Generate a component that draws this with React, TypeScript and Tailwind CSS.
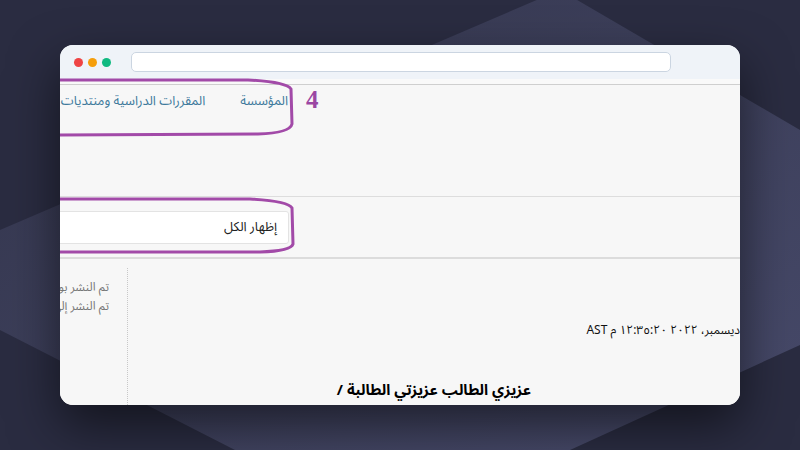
import React from "react";

const arabic = { fontFamily: '"Noto Sans Arabic", "DejaVu Sans", sans-serif' };

export default function App() {
  return (
    <div className="relative w-[800px] h-[450px] overflow-hidden bg-[#2a2c41]">
      {/* decorative background shapes */}
      <svg className="absolute inset-0" width="800" height="450" viewBox="0 0 800 450">
        <defs>
          <linearGradient id="g1" x1="0" y1="0" x2="1" y2="1">
            <stop offset="0" stopColor="#33354c" />
            <stop offset="1" stopColor="#474a6a" />
          </linearGradient>
        </defs>
        <polygon points="560,-10 800,130 800,345 570,450 235,450 0,330 0,230" fill="url(#g1)" />
      </svg>

      <div className="relative pt-[45px] pl-[60px]">
        <div className="w-[680px] h-[360px] rounded-[13px] overflow-hidden flex flex-col bg-[#f7f7f7] shadow-[0_20px_50px_rgba(0,0,0,0.55)]">
          {/* title bar */}
          <div className="h-[34px] shrink-0 bg-[#eff3f8] flex items-center">
            <div className="flex items-center gap-[5px] pl-[14px]">
              <span className="w-[9px] h-[9px] rounded-full bg-[#ef4444]" />
              <span className="w-[9px] h-[9px] rounded-full bg-[#f59e0b]" />
              <span className="w-[9px] h-[9px] rounded-full bg-[#10b981]" />
            </div>
            <div className="ml-[20px] w-[540px] h-[20px] bg-white border border-[#cbd5e1] rounded-[5px]" />
          </div>

          {/* page */}
          <div dir="rtl" className="flex-1 flex flex-col bg-[#f7f7f7] overflow-hidden" style={arabic}>
            <div className="h-[5px] shrink-0 bg-[#f9f9f9]" />
            <div className="h-[1px] shrink-0 bg-[#cfcfcf]" />
            {/* nav */}
            <div className="h-[111px] shrink-0 pr-[452px] pt-[7px] flex gap-[35px] whitespace-nowrap text-[13px] leading-[18px] text-[#3e7a9c]">
              <span>المؤسسة</span>
              <span>المقررات الدراسية ومنتديات</span>
              <span>المجتمعات</span>
            </div>
            <div className="h-[1px] shrink-0 bg-[#dddddd]" />
            {/* show all */}
            <div className="h-[60px] shrink-0 pr-[451px] pt-[14px] flex">
              <div className="w-[300px] h-[33px] shrink-0 bg-white border border-[#e3e3e3] rounded-[3px] flex items-center pr-[11px] text-[13px] text-[#222]">
                إظهار الكل
              </div>
            </div>
            <div className="h-[2px] shrink-0 bg-[#dcdcdc]" />
            {/* posts */}
            <div className="flex-1 flex">
              <div className="w-[612px] shrink-0 flex flex-col">
                <div className="pt-[64px] flex justify-start whitespace-nowrap text-[12px] leading-[16px] text-[#111]">
                  ديسمبر، ٢٠٢٢ ١٢:٣٥:٢٠ م AST
                </div>
                <div className="pt-[41px] text-center text-[15px] font-bold text-black leading-[20px]">
                  عزيزي الطالب عزيزتي الطالبة /
                </div>
              </div>
              <div className="mt-[9px] w-[68px] shrink-0 border-r border-dotted border-[#c8c8c8] pr-[18px] pt-[10px] whitespace-nowrap text-[12px] leading-[19px] text-[#777]">
                <div>تم النشر بواسطة</div>
                <div>تم النشر إلى</div>
              </div>
            </div>
          </div>
        </div>
      </div>

      {/* annotations overlay */}
      <svg className="absolute inset-0 pointer-events-none" width="800" height="450" viewBox="0 0 800 450">
        <path d="M60 80 L248 80 Q286 82 291 89 L292 124 Q290 133 258 134 L60 135" fill="none" stroke="#a24aa8" strokeWidth="3" />
        <path d="M60 199 L250 199 Q288 201 292 208 L293 244 Q291 251 260 252 L60 252" fill="none" stroke="#a24aa8" strokeWidth="3" />
      </svg>
      <div className="absolute left-[306px] top-[86px] text-[25px] leading-[28px] font-bold text-[#9b47a3]" style={{ fontFamily: '"Liberation Serif", serif' }}>
        4
      </div>
    </div>
  );
}
